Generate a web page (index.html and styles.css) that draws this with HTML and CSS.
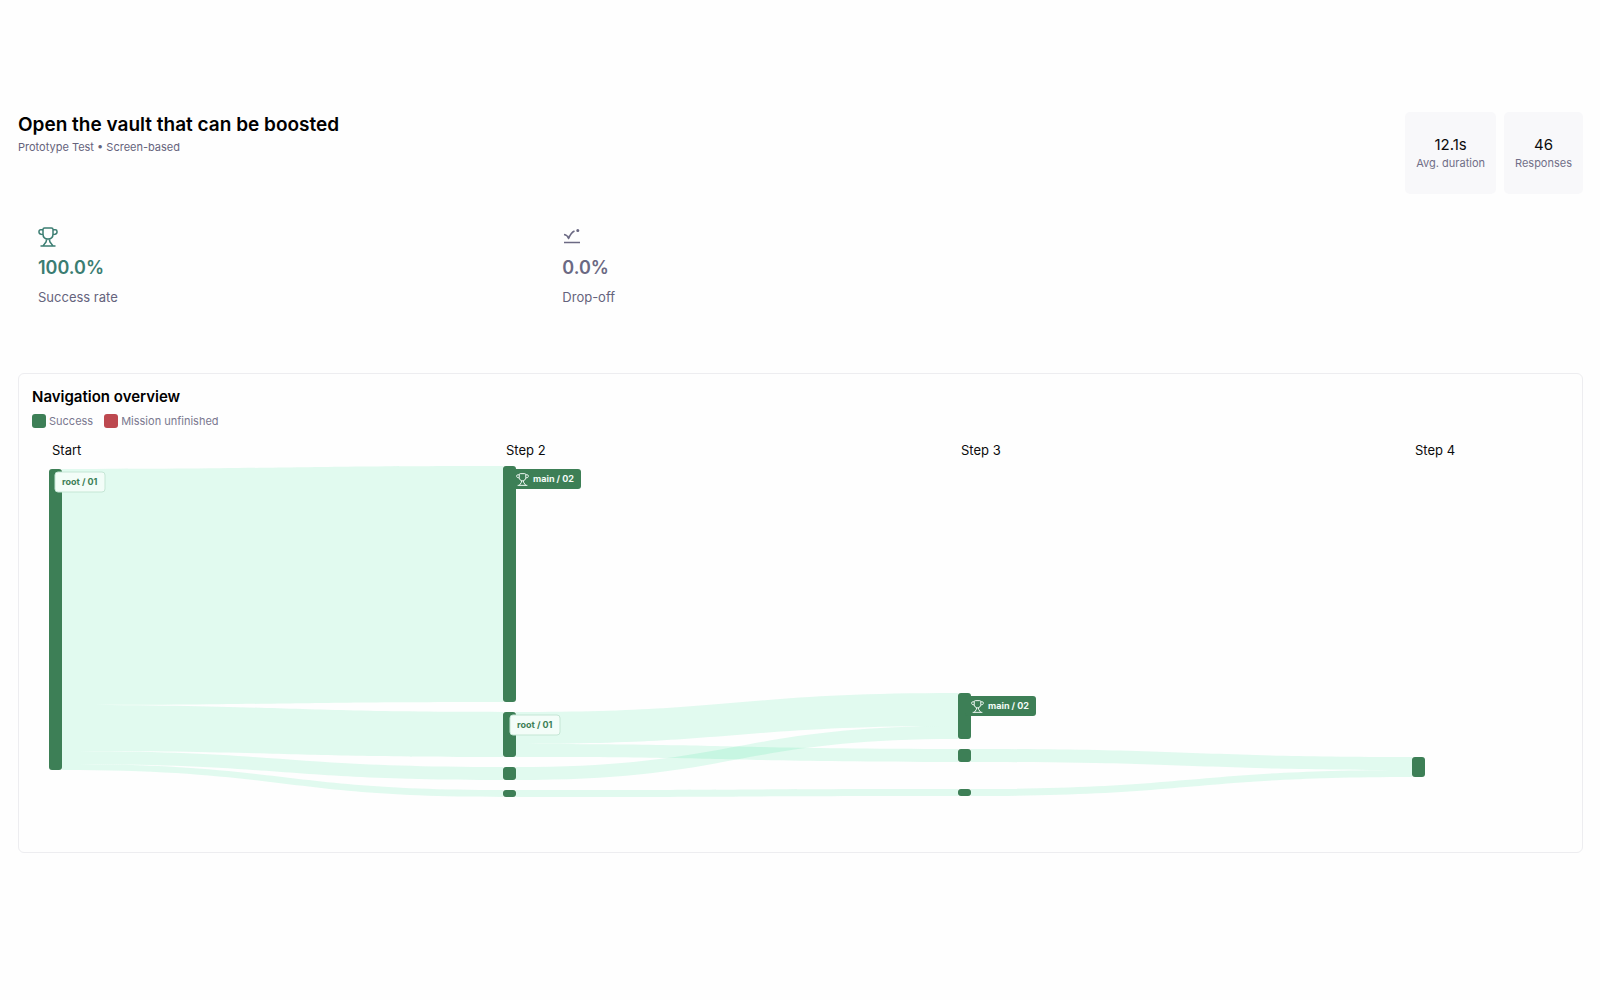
FILE: index.html
```html
<!DOCTYPE html>
<html lang="en">
<head>
<meta charset="utf-8">
<title>Open the vault that can be boosted</title>
<link rel="stylesheet" href="styles.css">
</head>
<body>
<svg class="defs" aria-hidden="true">
  <symbol id="trophy" viewBox="0 0 20 20">
    <path d="M5 2.500Q5 1 6.500 1h7Q15 1 15 2.500V7c0 3-2 5-5 5S5 10 5 7ZM5 2.800H2.700Q1 2.800 1 4.500v.8Q1 7.400 5 7.600M15 2.800h2.300Q19 2.800 19 4.500v.8q0 2.100-4 2.300M8.800 12 8 15l-3 3.900M11.200 12l.8 3 3 3.900M2.500 19h15"/>
  </symbol>
</svg>
<main class="page">
  <header class="header">
    <div>
      <h1 class="title">Open the vault that can be boosted</h1>
      <p class="subtitle">Prototype Test • Screen-based</p>
    </div>
    <div class="stats">
      <div class="stat"><span class="stat-value">12.1s</span><span class="stat-label">Avg. duration</span></div>
      <div class="stat"><span class="stat-value">46</span><span class="stat-label">Responses</span></div>
    </div>
  </header>

  <section class="metrics">
    <div class="metric">
      <svg class="icon success" viewBox="0 0 20 20"><use href="#trophy"/></svg>
      <strong class="metric-value success">100.0%</strong>
      <span class="metric-label">Success rate</span>
    </div>
    <div class="metric">
      <svg class="icon muted" viewBox="0 0 20 20"><path d="M2 7.500Q5.500 8 6.600 11.500 9 5.500 12.500 4M6.600 11.500 7.500 8.800M2 15.500h16"/><circle cx="15.800" cy="3.500" r=".8" fill="currentColor"/></svg>
      <strong class="metric-value muted">0.0%</strong>
      <span class="metric-label">Drop-off</span>
    </div>
  </section>

  <section class="card">
    <h2 class="card-title">Navigation overview</h2>
    <div class="legend">
      <span class="legend-item"><i class="swatch green"></i>Success</span>
      <span class="legend-item"><i class="swatch red"></i>Mission unfinished</span>
    </div>
    <div class="steps"><span>Start</span><span>Step 2</span><span>Step 3</span><span>Step 4</span></div>
    <svg class="sankey" viewBox="0 0 1537 378" role="img" aria-label="Navigation paths by step">
      <g class="links">
        <path d="M30 9C250 9 250 6 471 6V242C250 242 250 245 30 245Z"/>
        <path d="M30 245C250 245 250 252 471 252V297C250 297 250 291 30 291Z"/>
        <path d="M30 291C250 291 250 307 471 307V320C250 320 250 304 30 304Z"/>
        <path d="M30 304C250 304 250 330 471 330V337C250 337 250 310 30 310Z"/>
        <path d="M484 252C705 252 705 233 926 233V266C705 266 705 284 484 284Z"/>
        <path d="M484 284C705 284 705 289 926 289V302C705 302 705 297 484 297Z"/>
        <path d="M484 307C705 307 705 266 926 266V279C705 279 705 320 484 320Z"/>
        <path d="M484 330C705 330 705 329 926 329V336C705 336 705 337 484 337Z"/>
        <path d="M939 289C1160 289 1160 297 1380 297V310C1160 310 1160 302 939 302Z"/>
        <path d="M939 329C1160 329 1160 310 1380 310V317C1160 317 1160 336 939 336Z"/>
      </g>
      <g class="nodes">
        <rect x="17" y="9" width="13" height="301" rx="3"/>
        <rect x="471" y="6" width="13" height="236" rx="3"/>
        <rect x="471" y="252" width="13" height="45" rx="3"/>
        <rect x="471" y="307" width="13" height="13" rx="3"/>
        <rect x="471" y="330" width="13" height="7" rx="3"/>
        <rect x="926" y="233" width="13" height="46" rx="3"/>
        <rect x="926" y="289" width="13" height="13" rx="3"/>
        <rect x="926" y="329" width="13" height="7" rx="3"/>
        <rect x="1380" y="297" width="13" height="20" rx="3"/>
      </g>
      <g class="tag" transform="translate(23 12)"><rect width="50" height="20" rx="3"/><text x="7" y="13">root / 01</text></g>
      <g class="tag" transform="translate(478 255)"><rect width="50" height="20" rx="3"/><text x="7" y="13">root / 01</text></g>
      <g class="tag goal" transform="translate(478 9)"><rect width="71" height="20" rx="3"/><use href="#trophy" x="6" y="4" width="13" height="13"/><text x="23" y="13">main / 02</text></g>
      <g class="tag goal" transform="translate(933 236)"><rect width="71" height="20" rx="3"/><use href="#trophy" x="6" y="4" width="13" height="13"/><text x="23" y="13">main / 02</text></g>
    </svg>
  </section>
</main>
</body>
</html>
```
FILE: styles.css
```css
* { box-sizing: border-box; }
body { margin: 0; background: #fefefe; color: #0b0b0d; font-family: Inter, "Liberation Sans", sans-serif; }
h1, h2, p { margin: 0; }
.defs { position: absolute; width: 0; height: 0; }
.page { padding: 112px 17px 112px 18px; }

.header { display: flex; justify-content: space-between; align-items: flex-start; }
.title { font-size: 19px; line-height: 26px; font-weight: 600; color: #000; }
.subtitle { font-size: 11px; line-height: 18px; color: #65637c; }
.stats { display: flex; gap: 8px; }
.stat { display: flex; flex-direction: column; align-items: center; justify-content: center; height: 82px; padding: 0 11px; border-radius: 5px; background: #f8f8fa; }
.stat-value { font-size: 15px; line-height: 20px; }
.stat-label { font-size: 11px; line-height: 16px; color: #716f88; }

.metrics { display: grid; grid-template-columns: repeat(3, 1fr); gap: 8px; margin-top: 13px; }
.metric { display: flex; flex-direction: column; padding: 20px; }
.icon { width: 20px; height: 20px; fill: none; stroke: currentColor; stroke-width: 1.5; stroke-linejoin: round; }
.metric-value { margin-top: 9px; font-size: 18px; line-height: 24px; font-weight: 600; }
.metric-label { margin-top: 7px; font-size: 13px; line-height: 20px; color: #65637c; }
.success { color: #3b7d72; }
.muted { color: #6b6983; }

.card { margin-top: 46px; padding: 13px 13px 14px; border: 1px solid #ededf0; border-radius: 6px; }
.card-title { font-size: 15px; line-height: 20px; font-weight: 600; color: #000; }
.legend { display: flex; gap: 11px; margin-top: 4px; font-size: 11px; line-height: 20px; color: #7a788f; }
.legend-item { display: flex; align-items: center; gap: 3px; }
.swatch { width: 14px; height: 14px; border-radius: 3px; }
.green { background: #3d7f56; }
.red { background: #bd484f; }
.steps { display: grid; grid-template-columns: 454fr 455fr 454fr 154fr; margin-top: 9px; padding-left: 20px; font-size: 13px; line-height: 20px; }

.sankey { display: block; width: 100%; height: auto; }
.links { fill: #16de86; fill-opacity: .125; }
.nodes { fill: #3d7f56; }
.tag rect { fill: #f3fdf8; stroke: #c5e6d5; }
.tag text { fill: #3d7f56; font-size: 9px; font-weight: 700; }
.tag.goal rect { fill: #3d7f56; stroke: none; }
.tag.goal text { fill: #f4fbf7; }
.tag use { fill: none; stroke: #f4fbf7; stroke-width: 1.5; }
```
